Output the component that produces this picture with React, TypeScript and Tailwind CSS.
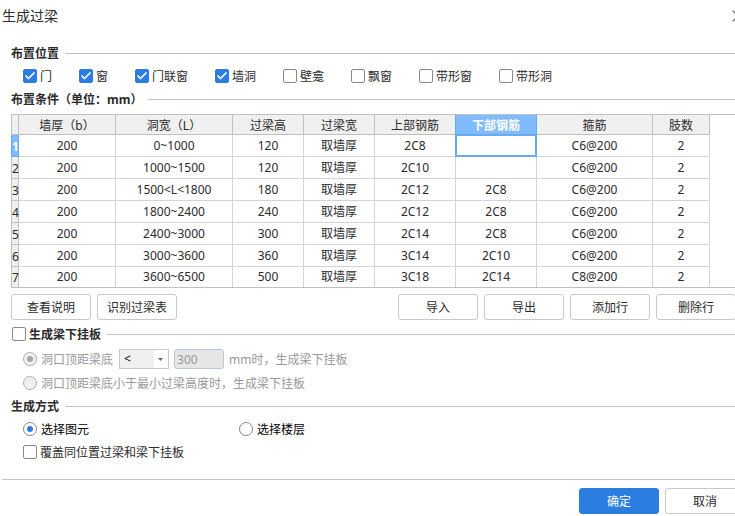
import { Check, X } from 'lucide-react';
import type { ReactNode } from 'react';

const positions = [
  { label: '门', checked: true },
  { label: '窗', checked: true },
  { label: '门联窗', checked: true },
  { label: '墙洞', checked: true },
  { label: '壁龛', checked: false },
  { label: '飘窗', checked: false },
  { label: '带形窗', checked: false },
  { label: '带形洞', checked: false },
];

const columns = ['墙厚（b）', '洞宽（L）', '过梁高', '过梁宽', '上部钢筋', '下部钢筋', '箍筋', '肢数'];
const activeCol = 5;

const rows = [
  ['200', '0~1000', '120', '取墙厚', '2C8', '', 'C6@200', '2'],
  ['200', '1000~1500', '120', '取墙厚', '2C10', '', 'C6@200', '2'],
  ['200', '1500<L<1800', '180', '取墙厚', '2C12', '2C8', 'C6@200', '2'],
  ['200', '1800~2400', '240', '取墙厚', '2C12', '2C8', 'C6@200', '2'],
  ['200', '2400~3000', '300', '取墙厚', '2C14', '2C8', 'C6@200', '2'],
  ['200', '3000~3600', '360', '取墙厚', '3C14', '2C10', 'C6@200', '2'],
  ['200', '3600~6500', '500', '取墙厚', '3C18', '2C14', 'C8@200', '2'],
];

function Checkbox({ label, checked = false }: { label: string; checked?: boolean }) {
  return (
    <label className="flex shrink-0 items-center gap-[3px]">
      <span className="grid size-3.5">
        <input
          type="checkbox"
          defaultChecked={checked}
          className="peer col-start-1 row-start-1 size-3.5 appearance-none rounded-[2px] border border-[#8a8a8a] bg-white checked:border-[#2b7de1] checked:bg-[#2b7de1]"
        />
        <Check
          className="pointer-events-none invisible col-start-1 row-start-1 place-self-center text-white peer-checked:visible"
          size={12}
          strokeWidth={3.5}
        />
      </span>
      <span className="pt-0.5">{label}</span>
    </label>
  );
}

function Radio({ label, name, checked = false, disabled = false }: { label: string; name: string; checked?: boolean; disabled?: boolean }) {
  return (
    <label className={`flex shrink-0 items-center gap-1 ${disabled ? 'text-[#999999]' : 'text-black'}`}>
      <span className="grid size-3.5">
        <input
          type="radio"
          name={name}
          defaultChecked={checked}
          disabled={disabled}
          className="peer col-start-1 row-start-1 size-3.5 appearance-none rounded-full border border-[#8a8a8a] bg-white disabled:border-[#b0b0b0] disabled:bg-[#f0f0f0]"
        />
        <span className="pointer-events-none invisible col-start-1 row-start-1 size-1.5 place-self-center rounded-full bg-[#2b7de1] peer-checked:visible peer-disabled:bg-[#a6a6a6]" />
      </span>
      <span className="pt-0.5">{label}</span>
    </label>
  );
}

function SectionLine() {
  return <div className="h-px flex-1 bg-[#c3c3c3]" />;
}

function Section({ title }: { title: string }) {
  return (
    <div className="flex h-4 items-center gap-1.5 pl-[11px]">
      <h2 className="shrink-0 pt-0.5 font-bold">{title}</h2>
      <SectionLine />
    </div>
  );
}

function Button({ children, primary = false }: { children: ReactNode; primary?: boolean }) {
  return (
    <button
      type="button"
      className={`h-[26px] w-20 shrink-0 rounded-[3px] border pt-0.5 ${primary ? 'border-[#2b7de1] bg-[#2b7de1] text-white' : 'border-[#c8c8c8] bg-white'}`}
    >
      {children}
    </button>
  );
}

function headerColor(idx: number) {
  if (idx === activeCol) return 'border-[#66abeb] bg-[#80bbff] font-bold text-white';
  if (idx === activeCol - 1) return 'border-r-[#66abeb] border-b-[#c0c0c0] bg-[#f0f0f0] font-normal';
  return 'border-[#c0c0c0] bg-[#f0f0f0] font-normal';
}

function ConditionTable() {
  return (
    <div className="ml-[11px] overflow-hidden border-y border-[#c0c0c0]">
      <table className="w-[699px] table-fixed border-separate border-spacing-0 text-center">
        <colgroup>
          <col className="w-2" />
          <col className="w-[97px]" />
          <col className="w-[117px]" />
          <col className="w-[71px]" />
          <col className="w-[71px]" />
          <col className="w-[81px]" />
          <col className="w-[81px]" />
          <col className="w-[116px]" />
          <col className="w-[57px]" />
        </colgroup>
        <thead>
          <tr className="h-5">
            <td className="border-x border-b border-[#c0c0c0] bg-[#f0f0f0] p-0" />
            {columns.map((col, idx) => (
              <th key={col} scope="col" className={`border-r border-b p-0 pt-0.5 ${headerColor(idx)}`}>
                {col}
              </th>
            ))}
          </tr>
        </thead>
        <tbody>
          {rows.map((row, r) => {
            const last = r === rows.length - 1;
            return (
              <tr key={r} className={last ? 'h-5' : 'h-[22px]'}>
                <th
                  scope="row"
                  className={`border-x p-0 pt-0.5 ${last ? '' : 'border-b'} ${r === 0 ? 'border-[#66abeb] bg-[#80bbff] font-bold text-white' : 'border-[#c0c0c0] bg-[#f0f0f0] font-normal'}`}
                >
                  {r + 1}
                </th>
                {row.map((cell, c) => (
                  <td key={c} className={`relative border-r border-[#d4d4d4] p-0 ${last ? '' : 'border-b'}`}>
                    {r === 0 && c === activeCol ? (
                      <input
                        aria-label={columns[c]}
                        className="absolute -inset-px border-2 border-[#66abeb] bg-white text-center outline-none"
                      />
                    ) : (
                      cell
                    )}
                  </td>
                ))}
              </tr>
            );
          })}
        </tbody>
      </table>
    </div>
  );
}

export default function App() {
  return (
    <div className="w-full overflow-hidden bg-white font-['Noto_Sans','Noto_Sans_CJK_SC',sans-serif] text-[12px] leading-4 text-[#2b2b2b]">
      <header className="flex h-8 items-center justify-between pl-0.5">
        <h1 className="text-[14px]">生成过梁</h1>
        <button type="button" aria-label="关闭" className="-mr-[13px] shrink-0 text-[#777777]">
          <X size={20} strokeWidth={1.5} />
        </button>
      </header>

      <main className="pt-[13px]">
        <Section title="布置位置" />
        <div className="flex h-[30px] items-center gap-[27px] pl-[23px]">
          {positions.map((p) => (
            <Checkbox key={p.label} label={p.label} checked={p.checked} />
          ))}
        </div>

        <Section title="布置条件（单位：mm）" />
        <div className="pt-[7px]">
          <ConditionTable />
        </div>

        <div className="-mr-px flex justify-between pt-1.5 pl-[11px]">
          <div className="flex gap-1.5">
            <Button>查看说明</Button>
            <Button>识别过梁表</Button>
          </div>
          <div className="flex gap-1.5">
            <Button>导入</Button>
            <Button>导出</Button>
            <Button>添加行</Button>
            <Button>删除行</Button>
          </div>
        </div>

        <div className="mt-1.5 flex h-4 items-center gap-1.5 pl-3 font-bold">
          <Checkbox label="生成梁下挂板" />
          <SectionLine />
        </div>
        <div className="flex h-[33px] items-center pt-px pl-[23px] text-[#999999]">
          <Radio name="hang" label="洞口顶距梁底" checked disabled />
          <div className="ml-1.5 grid h-5 w-[50px]">
            <select
              aria-label="比较方式"
              disabled
              className="col-start-1 row-start-1 appearance-none border border-[#c8c8c8] bg-linear-to-r from-[#f0f0f0] from-70% to-white to-70% pl-1 text-black opacity-100"
            >
              <option>&lt;</option>
            </select>
            <svg className="pointer-events-none col-start-1 row-start-1 mr-1.5 self-center justify-self-end" width="5" height="3" viewBox="0 0 5 3">
              <path d="M0 0h5L2.5 3z" fill="#666666" />
            </svg>
          </div>
          <input
            aria-label="距离"
            disabled
            defaultValue="300"
            className="ml-[5px] h-5 w-[50px] rounded-[3px] border border-[#b9c6d6] bg-[#e6e6e6] px-0.5"
          />
          <span className="ml-[5px] pt-0.5">mm时，生成梁下挂板</span>
        </div>
        <div className="flex h-4 items-center pl-[23px]">
          <Radio name="hang" label="洞口顶距梁底小于最小过梁高度时，生成梁下挂板" disabled />
        </div>

        <div className="pt-[7px]">
          <Section title="生成方式" />
        </div>
        <div className="flex h-[30px] items-center pl-[23px]">
          <div className="w-[216px]">
            <Radio name="mode" label="选择图元" checked />
          </div>
          <Radio name="mode" label="选择楼层" />
        </div>
        <div className="flex h-4 items-center pl-[23px]">
          <Checkbox label="覆盖同位置过梁和梁下挂板" />
        </div>
      </main>

      <footer className="mt-[19px] ml-0.5 flex justify-end gap-1.5 border-t border-[#c3c3c3] pt-2 pb-0.5">
        <Button primary>确定</Button>
        <div className="-mr-2.5">
          <Button>取消</Button>
        </div>
      </footer>
    </div>
  );
}
